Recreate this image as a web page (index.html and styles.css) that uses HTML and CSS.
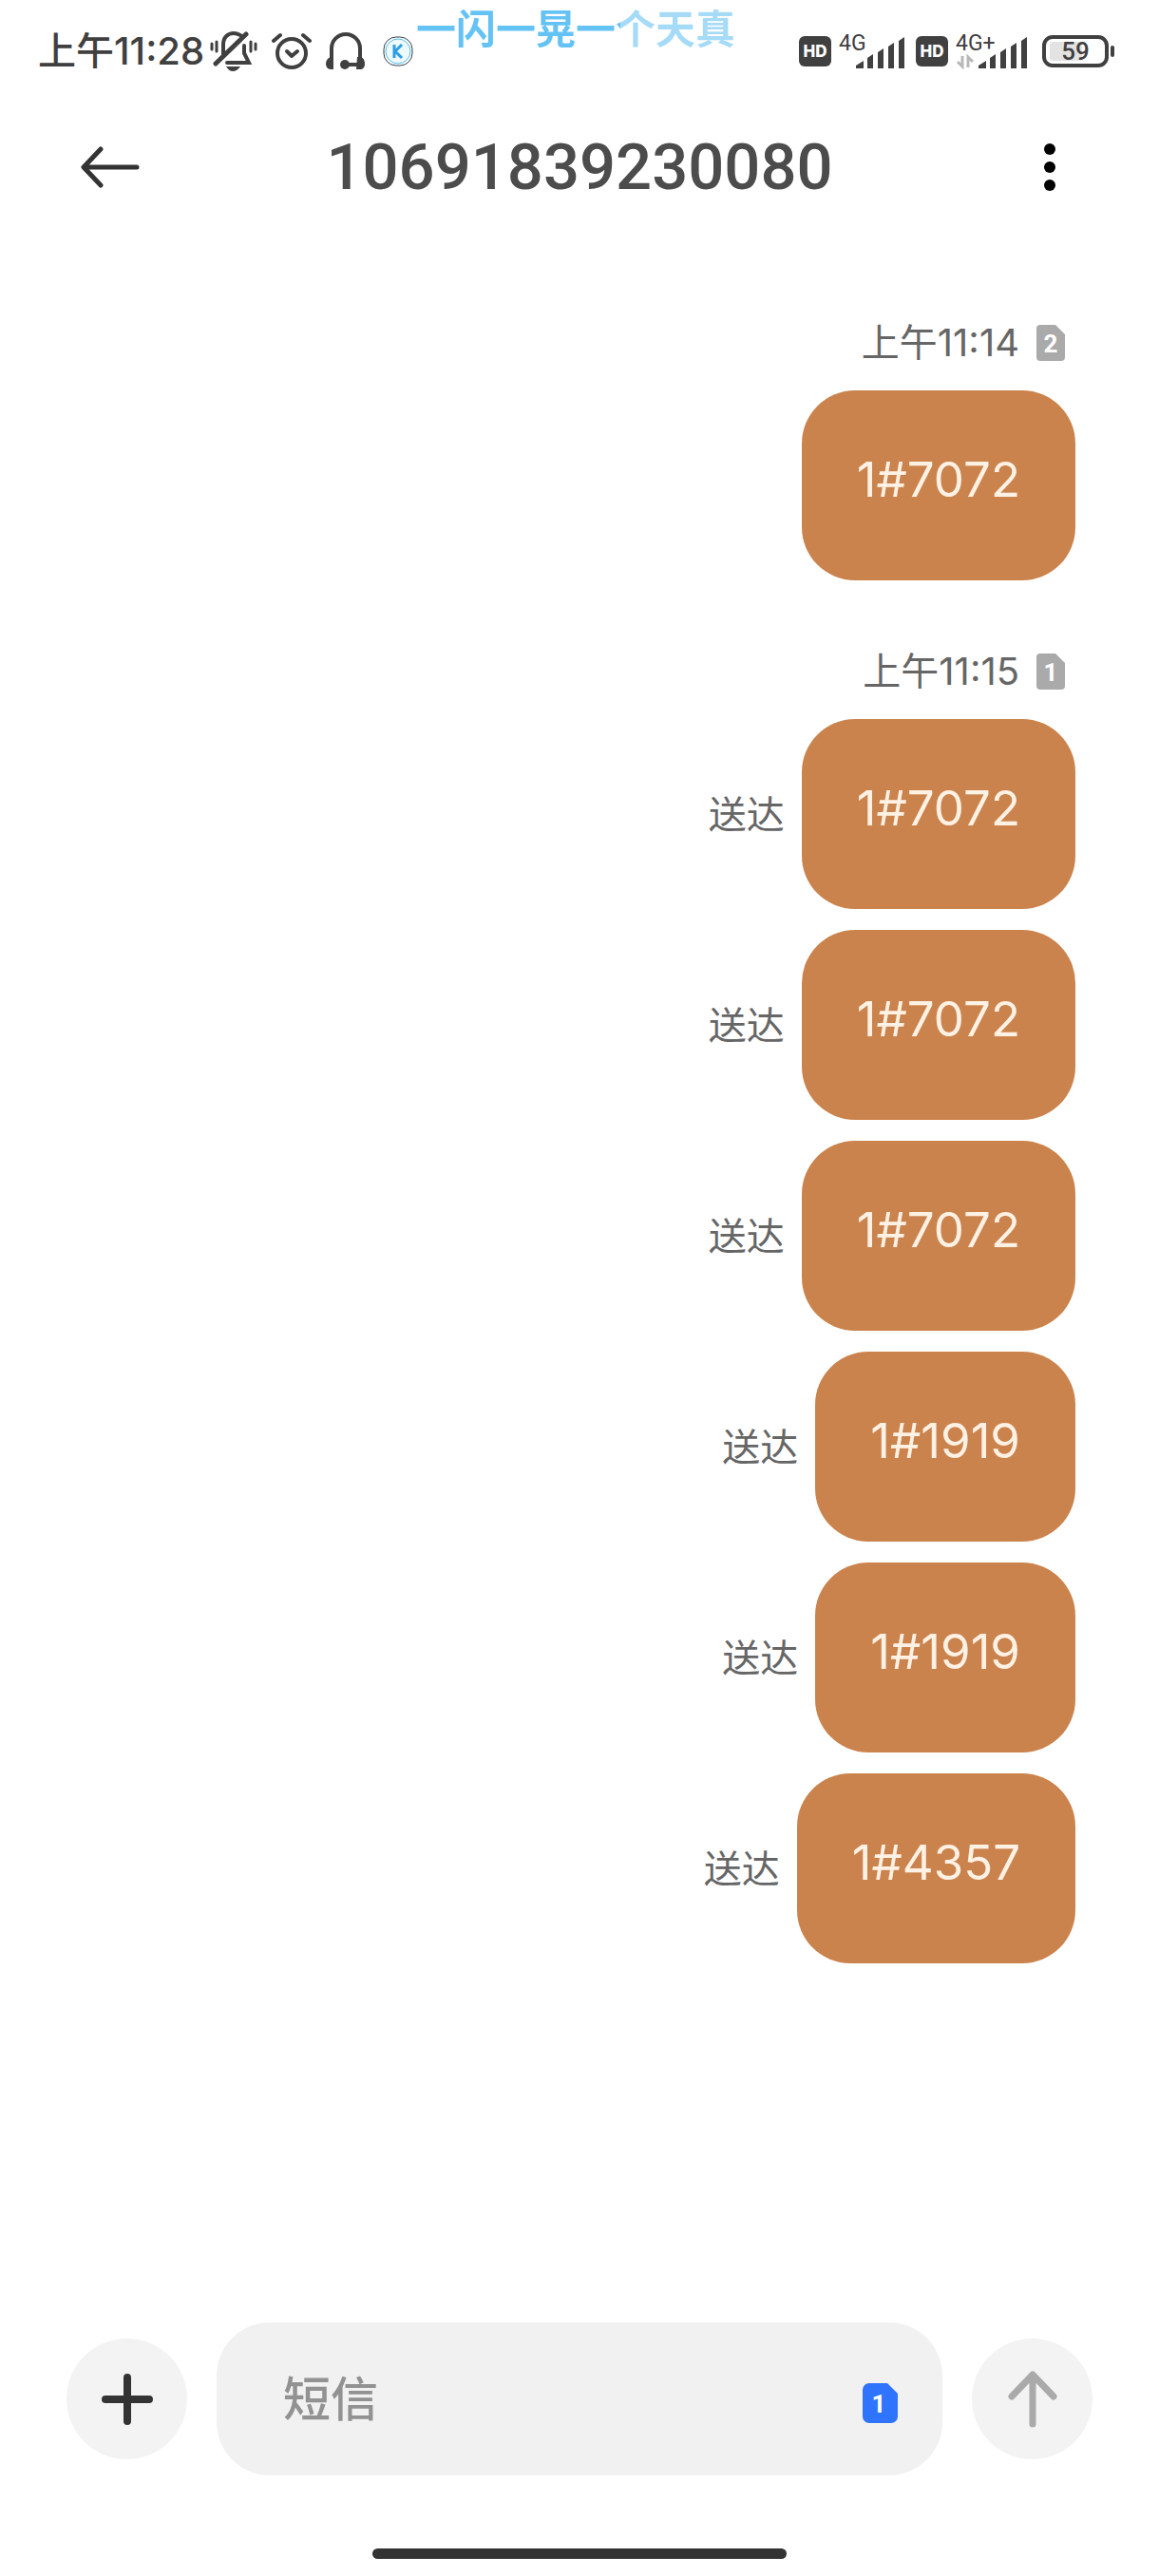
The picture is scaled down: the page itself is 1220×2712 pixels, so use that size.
FILE: index.html
```html
<!DOCTYPE html>
<html lang="zh-CN">
  <head>
    <meta charset="utf-8">
    <meta name="viewport" content="width=device-width, initial-scale=1">
    <title>10691839230080</title>
    <link rel="stylesheet" href="styles.css">
  </head>

  <body>
    <div class="statusBar">
      <span class="clock">上午11:28</span>
      <svg class="bell" width="50" height="42" viewBox="0 0 50 42">
        <g fill="none" stroke="#404040" stroke-width="4" stroke-linecap="round">
          <path d="M14 25V14C14 6 19 2 25 2c3 0 5 1 7 2"/>
          <path d="M6 34 38 3" stroke-width="5"/>
          <path d="M36 15v8l5 10H18"/>
          <path d="M2 13v6M7 11v10M43 11v10M48 13v6" stroke-width="3"/>
        </g>
        <path d="M17 37h15c-2 3-5 5-8 5s-5-2-7-5z" fill="#404040"/>
      </svg>
      <svg class="alarm" width="42" height="40" viewBox="0 0 42 40">
        <g fill="none" stroke="#404040" stroke-width="4" stroke-linecap="round" stroke-linejoin="round">
          <circle cx="21" cy="22" r="15"/>
          <path d="M2 9 9 3M33 3l7 6"/>
          <path d="m16 20 5 5 6-5"/>
        </g>
      </svg>
      <svg class="headset" width="42" height="40" viewBox="0 0 42 40">
        <path d="M6 30V17a15 15 0 0 1 30 0v13M20 34h16" fill="none" stroke="#404040" stroke-width="4"/>
        <path d="M8 26v13H5c-3 0-5-3-5-6s2-6 5-7zM33 26h3c3 0 5 3 5 7s-2 6-5 6h-4z" fill="#404040"/>
        <circle cx="20" cy="34" r="5" fill="#404040"/>
      </svg>
      <svg class="music" width="32" height="32" viewBox="0 0 32 32">
        <rect x="1" y="1" width="30" height="30" rx="13" fill="#fff" stroke="#33424f" stroke-width="1"/>
        <circle cx="16" cy="16" r="13" fill="#eef9fd" stroke="#55bfe0" stroke-width="1"/>
        <path d="M12 9v14M20 9l-7 7 7 7" fill="none" stroke="#2b9fe6" stroke-width="3"/>
      </svg>

      <div class="statusRight">
        <svg width="34" height="32" viewBox="0 0 34 32">
          <rect width="34" height="32" rx="6" fill="#404040"/>
          <text x="17" y="22" class="hdText">HD</text>
        </svg>
        <svg class="signal" width="69" height="38" viewBox="0 0 69 38">
          <text x="0" y="18" class="netText">4G</text>
          <path d="M18 37v-3l8-5v8zM30 37V26l6-4v15zM41 37V20l6-4v21zM52 37V14l6-4v27zM63 37V8l6-4v33z" fill="#404040"/>
        </svg>
        <svg width="34" height="32" viewBox="0 0 34 32">
          <rect width="34" height="32" rx="6" fill="#404040"/>
          <text x="17" y="22" class="hdText">HD</text>
        </svg>
        <svg class="signal" width="75" height="38" viewBox="0 0 75 38">
          <text x="0" y="18" class="netText">4G+</text>
          <path d="M24 37v-3l8-5v8zM36 37V26l6-4v15zM47 37V20l6-4v21zM58 37V14l6-4v27zM69 37V8l6-4v33z" fill="#404040"/>
          <path d="M7 24v11l-5-5M13 36V25l5 5" fill="none" stroke="#b8b8b8" stroke-width="3"/>
        </svg>
        <svg class="battery" width="76" height="34" viewBox="0 0 76 34">
          <rect x="8" y="7" width="34" height="20" rx="3" fill="#e3e3e3"/>
          <rect x="2" y="2" width="66" height="30" rx="9" fill="none" stroke="#404040" stroke-width="4"/>
          <rect x="72" y="11" width="4" height="12" rx="2" fill="#404040"/>
          <text x="35" y="26" class="batteryText">59</text>
        </svg>
      </div>
      <!-- floating lyric line from the music player -->
      <div class="lyrics">一闪一晃一个天真</div>
    </div>

    <header class="topBar">
      <button class="iconButton" aria-label="返回">
        <svg width="62" height="44" viewBox="0 0 62 44">
          <path d="M59 22H4M21 3 3 22l18 19" fill="none" stroke="#333" stroke-width="5" stroke-linecap="round" stroke-linejoin="round"/>
        </svg>
      </button>
      <h1>10691839230080</h1>
      <button class="iconButton" aria-label="更多">
        <svg width="62" height="52" viewBox="0 0 62 52">
          <circle cx="32" cy="7" r="6"/>
          <circle cx="32" cy="26" r="6"/>
          <circle cx="32" cy="45" r="6"/>
        </svg>
      </button>
    </header>

    <main class="messages">
      <div class="timeRow">
        <span>上午11:14</span>
        <svg width="30" height="38" viewBox="0 0 30 38">
          <path d="M4 0h16l10 10v24a4 4 0 0 1-4 4H4a4 4 0 0 1-4-4V4a4 4 0 0 1 4-4z" fill="#aaa"/>
          <text x="15" y="29" class="simText">2</text>
        </svg>
      </div>
      <div class="message"><p class="bubble">1#7072</p></div>

      <div class="timeRow">
        <span>上午11:15</span>
        <svg width="30" height="38" viewBox="0 0 30 38">
          <path d="M4 0h16l10 10v24a4 4 0 0 1-4 4H4a4 4 0 0 1-4-4V4a4 4 0 0 1 4-4z" fill="#aaa"/>
          <text x="15" y="29" class="simText">1</text>
        </svg>
      </div>
      <div class="message"><span class="sent">送达</span><p class="bubble">1#7072</p></div>
      <div class="message"><span class="sent">送达</span><p class="bubble">1#7072</p></div>
      <div class="message"><span class="sent">送达</span><p class="bubble">1#7072</p></div>
      <div class="message"><span class="sent">送达</span><p class="bubble">1#1919</p></div>
      <div class="message"><span class="sent">送达</span><p class="bubble">1#1919</p></div>
      <div class="message"><span class="sent">送达</span><p class="bubble">1#4357</p></div>
    </main>

    <form class="composer">
      <button type="button" class="roundButton" aria-label="添加">
        <svg width="54" height="54" viewBox="0 0 54 54">
          <path d="M27 4v46M4 27h46" stroke="#333" stroke-width="8" stroke-linecap="round"/>
        </svg>
      </button>
      <div class="field">
        <input type="text" placeholder="短信" aria-label="短信">
        <button type="button" class="simButton" aria-label="切换SIM卡">
          <svg width="37" height="42" viewBox="0 0 37 42">
            <path d="M7 0h19l11 11v24a7 7 0 0 1-7 7H7a7 7 0 0 1-7-7V7a7 7 0 0 1 7-7z" fill="#2f74ff"/>
            <text x="17" y="31" class="simText">1</text>
          </svg>
        </button>
      </div>
      <button type="button" class="roundButton" aria-label="发送">
        <svg width="54" height="62" viewBox="0 0 54 62">
          <path d="M27 57V5M5 28 27 5l22 23" fill="none" stroke="#aaa" stroke-width="7" stroke-linecap="round" stroke-linejoin="round"/>
        </svg>
      </button>
    </form>
    <div class="homeBar"></div>
  </body>
</html>
```
FILE: styles.css
```css
* {
  box-sizing: border-box;
}
body {
  margin: 0;
  min-height: 100vh;
  display: flex;
  flex-direction: column;
  background-color: #fff;
  font-family: Inter, "Noto Sans CJK SC", sans-serif;
}
svg {
  display: block;
  flex: none;
}
button {
  border: 0;
  padding: 0;
  background: none;
  cursor: pointer;
}

.statusBar {
  position: relative;
  display: flex;
  align-items: center;
  height: 108px;
  padding: 0 47px 0 40px;
  color: #404040;
}
.clock {
  font-size: 40px;
  line-height: 60px;
  font-weight: 500;
}
.bell {
  margin-left: 6px;
}
.alarm {
  margin-left: 15px;
}
.headset {
  margin-left: 15px;
}
.music {
  margin-left: 18px;
}
.statusRight {
  display: flex;
  align-items: center;
  gap: 12px;
  margin-left: auto;
}
.signal {
  margin-left: -4px;
}
.battery {
  margin-left: 4px;
}
.hdText {
  fill: #fff;
  font-size: 17px;
  font-weight: 800;
  text-anchor: middle;
}
.netText {
  fill: #404040;
  font-family: Roboto, sans-serif;
  font-size: 23px;
}
.batteryText {
  fill: #404040;
  font-family: Roboto, sans-serif;
  font-size: 26px;
  font-weight: 500;
  text-anchor: middle;
}
.lyrics {
  position: absolute;
  top: 0;
  left: 0;
  right: 8px;
  width: max-content;
  margin: 0 auto;
  font-family: "Noto Sans CJK SC", sans-serif;
  font-size: 42px;
  line-height: 56px;
  font-weight: 700;
  color: transparent;
  background: linear-gradient(to right, #64c3f4 64%, #a6dbf7 64%);
  -webkit-background-clip: text;
  background-clip: text;
}

.topBar {
  display: flex;
  align-items: center;
  justify-content: space-between;
  height: 136px;
  padding: 0 85px;
}
.topBar h1 {
  margin: 0;
  color: #4c4c4c;
  font-family: Roboto, sans-serif;
  font-size: 67px;
  font-weight: 500;
  line-height: 80px;
}

.messages {
  flex: 1;
  padding: 21px 88px;
}
.timeRow {
  display: flex;
  align-items: center;
  justify-content: flex-end;
  gap: 18px;
  height: 60px;
  margin: 66px 11px 20px 0;
  color: #666;
  font-size: 40px;
}
.timeRow span {
  padding-bottom: 6px;
}
.simText {
  fill: #fff;
  font-family: Roboto, sans-serif;
  font-size: 26px;
  font-weight: 700;
  text-anchor: middle;
}
.message {
  display: flex;
  align-items: center;
  justify-content: flex-end;
  gap: 18px;
}
.message + .message {
  margin-top: 22px;
}
.sent {
  padding-bottom: 4px;
  color: #666;
  font-size: 40px;
}
.bubble {
  margin: 0;
  padding: 64px 58px 76px;
  border-radius: 56px;
  background-color: #cb834d;
  color: #fff1e4;
  font-size: 51px;
  line-height: 60px;
}

.composer {
  display: flex;
  align-items: center;
  gap: 31px;
  padding: 0 70px;
}
.roundButton {
  display: flex;
  align-items: center;
  justify-content: center;
  flex: none;
  width: 127px;
  height: 127px;
  border-radius: 50%;
  background-color: #f3f3f3;
}
.field {
  flex: 1;
  min-width: 0;
  display: flex;
  align-items: center;
  height: 161px;
  padding: 0 47px 0 70px;
  border-radius: 56px;
  background-color: #f1f1f1;
}
.field input {
  flex: 1;
  min-width: 0;
  padding: 0;
  border: 0;
  outline: 0;
  background: none;
  color: #333;
  font-family: inherit;
  font-size: 50px;
  font-weight: 500;
}
.field input::placeholder {
  color: #929292;
  opacity: 1;
}
.simButton {
  padding-top: 8px;
}
.homeBar {
  width: 436px;
  height: 11px;
  margin: 77px auto 18px;
  border-radius: 6px;
  background-color: #333;
}
```
